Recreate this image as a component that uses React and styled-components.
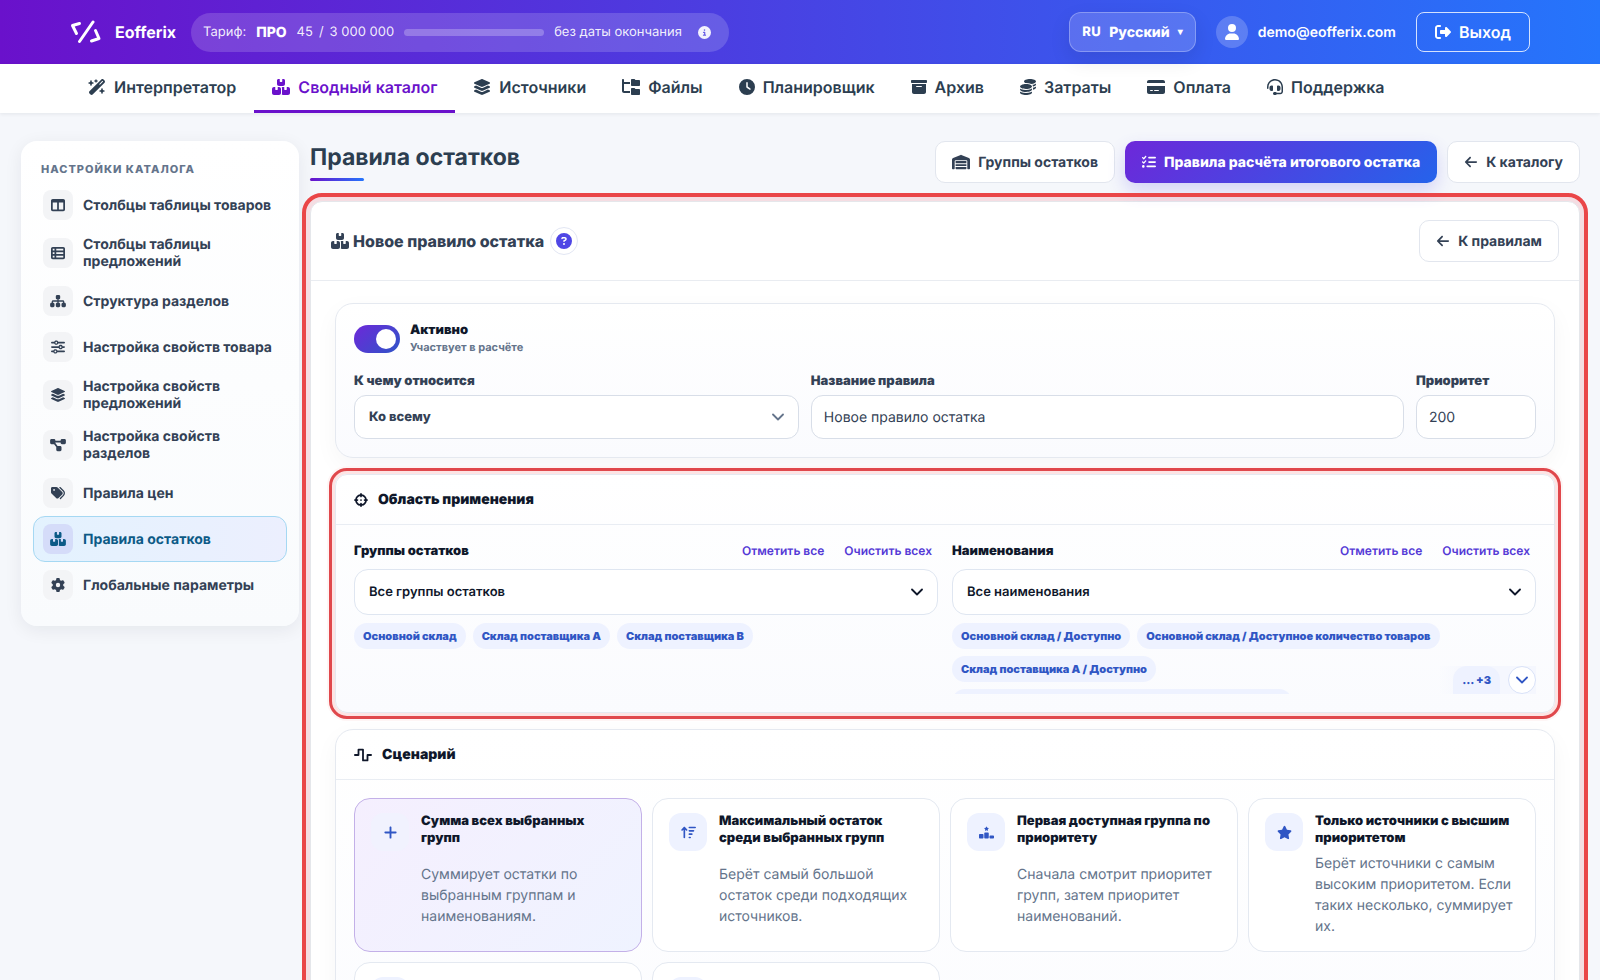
import { useState } from 'react';
import styled, { createGlobalStyle, css } from 'styled-components';
import {
    FaWandMagicSparkles, FaBoxesStacked, FaLayerGroup, FaFolderTree, FaClock, FaBoxArchive,
    FaCoins, FaCreditCard, FaHeadset, FaTableColumns, FaTableList, FaSitemap, FaSliders,
    FaDiagramProject, FaTags, FaGear, FaWarehouse, FaListCheck, FaArrowLeft, FaCrosshairs,
    FaWaveSquare, FaPlus, FaArrowUpWideShort, FaRankingStar, FaStar, FaRightFromBracket,
    FaCircleInfo, FaCircleQuestion, FaUser,
} from 'react-icons/fa6';

const navItems = [
    { label: 'Интерпретатор', Icon: FaWandMagicSparkles, wide: true },
    { label: 'Сводный каталог', Icon: FaBoxesStacked, wide: true, active: true },
    { label: 'Источники', Icon: FaLayerGroup, wide: true },
    { label: 'Файлы', Icon: FaFolderTree, wide: true },
    { label: 'Планировщик', Icon: FaClock },
    { label: 'Архив', Icon: FaBoxArchive },
    { label: 'Затраты', Icon: FaCoins },
    { label: 'Оплата', Icon: FaCreditCard, wide: true },
    { label: 'Поддержка', Icon: FaHeadset },
];

const sideItems = [
    { label: 'Столбцы таблицы товаров', Icon: FaTableColumns },
    { label: 'Столбцы таблицы предложений', Icon: FaTableList },
    { label: 'Структура разделов', Icon: FaSitemap },
    { label: 'Настройка свойств товара', Icon: FaSliders },
    { label: 'Настройка свойств предложений', Icon: FaLayerGroup },
    { label: 'Настройка свойств разделов', Icon: FaDiagramProject },
    { label: 'Правила цен', Icon: FaTags },
    { label: 'Правила остатков', Icon: FaBoxesStacked, active: true },
    { label: 'Глобальные параметры', Icon: FaGear },
];

const groupChips = ['Основной склад', 'Склад поставщика A', 'Склад поставщика B'];

const nameChips = [
    'Основной склад / Доступно',
    'Основной склад / Доступное количество товаров',
    'Склад поставщика A / Доступно',
];

const scenarios = [
    {
        title: 'Сумма всех выбранных групп',
        text: 'Суммирует остатки по выбранным группам и наименованиям.',
        Icon: FaPlus,
    },
    {
        title: 'Максимальный остаток среди выбранных групп',
        text: 'Берёт самый большой остаток среди подходящих источников.',
        Icon: FaArrowUpWideShort,
    },
    {
        title: 'Первая доступная группа по приоритету',
        text: 'Сначала смотрит приоритет групп, затем приоритет наименований.',
        Icon: FaRankingStar,
    },
    {
        title: 'Только источники с высшим приоритетом',
        text: 'Берёт источники с самым высоким приоритетом. Если таких несколько, суммирует их.',
        Icon: FaStar,
    },
];

function Logo(){
    return (
        <svg width="31" height="24" viewBox="0 0 31 24" fill="none" stroke="#fff" strokeWidth="3" strokeLinecap="round" strokeLinejoin="round" aria-hidden="true">
            <path d="M9.500 3.500L2.500 5.500L6.500 13.500" />
            <path d="M23 2L9.500 21.500" />
            <path d="M25.500 10.500L29 18.500L21.500 21" />
        </svg>
    );
}

function Chevron(){
    return (
        <svg width="12" height="8" viewBox="0 0 12 8" fill="none" stroke="currentColor" strokeWidth="1.800" strokeLinecap="round" strokeLinejoin="round" aria-hidden="true">
            <path d="M1 1.500L6 6.500L11 1.500" />
        </svg>
    );
}

function ScopeColumn({ id, label, value, children }){
    return (
        <div>
            <ScopeHead>
                <ScopeLabel htmlFor={id}>{label}</ScopeLabel>
                <ScopeActions>
                    <LinkButton type="button">Отметить все</LinkButton>
                    <LinkButton type="button">Очистить всех</LinkButton>
                </ScopeActions>
            </ScopeHead>
            <SelectWrap $dark>
                <ScopeSelect id={id}>
                    <option>{value}</option>
                </ScopeSelect>
                <Chevron />
            </SelectWrap>
            {children}
        </div>
    );
}

export default function App(){

    const [active, setActive] = useState(true);
    const [name, setName] = useState('Новое правило остатка');
    const [priority, setPriority] = useState('200');
    const [scenario, setScenario] = useState(0);

    return (
        <>
            <GlobalStyle />
            <Header>
                <Brand href="#">
                    <Logo />
                    Eofferix
                </Brand>
                <Tariff>
                    <span>Тариф:</span>
                    <TariffName>ПРО</TariffName>
                    <Usage>
                        <span>45</span>
                        <span>/</span>
                        <span>3 000 000</span>
                    </Usage>
                    <TariffBar />
                    <span>без даты окончания</span>
                    <FaCircleInfo />
                </Tariff>
                <UserArea>
                    <LangButton type="button">
                        <LangCode>RU</LangCode>
                        Русский
                        <Caret>▾</Caret>
                    </LangButton>
                    <User>
                        <Avatar><FaUser /></Avatar>
                        demo@eofferix.com
                    </User>
                    <LogoutButton type="button">
                        <FaRightFromBracket />
                        Выход
                    </LogoutButton>
                </UserArea>
            </Header>

            <Nav>
                {navItems.map(({ label, Icon, active, wide }) => (
                    <NavLink href="#" key={label} $active={active}>
                        <Icon size={wide ? 18 : 16} />
                        {label}
                    </NavLink>
                ))}
            </Nav>

            <Page>
                <Sidebar>
                    <SideTitle>Настройки каталога</SideTitle>
                    {sideItems.map(({ label, Icon, active }) => (
                        <SideLink href="#" key={label} $active={active}>
                            <SideIcon $active={active}><Icon /></SideIcon>
                            {label}
                        </SideLink>
                    ))}
                </Sidebar>

                <Main>
                    <TitleRow>
                        <PageTitle>Правила остатков</PageTitle>
                        <Actions>
                            <Button type="button"><FaWarehouse size={18} />Группы остатков</Button>
                            <Button type="button" $primary><FaListCheck />Правила расчёта итогового остатка</Button>
                            <Button type="button"><FaArrowLeft />К каталогу</Button>
                        </Actions>
                    </TitleRow>

                    <Card>
                        <CardHead>
                            <CardTitle>
                                <FaBoxesStacked size={18} />
                                Новое правило остатка
                            </CardTitle>
                            <HelpButton type="button" aria-label="?"><FaCircleQuestion /></HelpButton>
                            <Button type="button"><FaArrowLeft />К правилам</Button>
                        </CardHead>

                        <CardBody>
                            <Section>
                                <SectionBody>
                                    <SwitchRow>
                                        <Switch id="active" type="checkbox" checked={active} onChange={e => setActive(e.target.checked)} />
                                        <SwitchLabel htmlFor="active">
                                            Активно
                                            <small>Участвует в расчёте</small>
                                        </SwitchLabel>
                                    </SwitchRow>
                                    <Fields>
                                        <Field>
                                            <label htmlFor="target">К чему относится</label>
                                            <SelectWrap>
                                                <Select id="target">
                                                    <option>Ко всему</option>
                                                </Select>
                                                <Chevron />
                                            </SelectWrap>
                                        </Field>
                                        <Field>
                                            <label htmlFor="name">Название правила</label>
                                            <Input id="name" value={name} onChange={e => setName(e.target.value)} />
                                        </Field>
                                        <Field>
                                            <label htmlFor="priority">Приоритет</label>
                                            <Input id="priority" value={priority} onChange={e => setPriority(e.target.value)} />
                                        </Field>
                                    </Fields>
                                </SectionBody>
                            </Section>

                            <Section $highlight>
                                <SectionHead><FaCrosshairs />Область применения</SectionHead>
                                <SectionBody>
                                    <ScopeGrid>
                                        <ScopeColumn id="groups" label="Группы остатков" value="Все группы остатков">
                                            <Chips>
                                                {groupChips.map(chip => <Chip key={chip}>{chip}</Chip>)}
                                            </Chips>
                                        </ScopeColumn>
                                        <ScopeColumn id="names" label="Наименования" value="Все наименования">
                                            <Chips $collapsed>
                                                {nameChips.map(chip => <Chip key={chip}>{chip}</Chip>)}
                                                <ChipPeek />
                                                <More>
                                                    <MoreCount>... +3</MoreCount>
                                                    <MoreButton type="button" aria-label="+3"><Chevron /></MoreButton>
                                                </More>
                                            </Chips>
                                        </ScopeColumn>
                                    </ScopeGrid>
                                </SectionBody>
                            </Section>

                            <Section>
                                <SectionHead><FaWaveSquare size={18} />Сценарий</SectionHead>
                                <SectionBody>
                                    <Scenarios>
                                        {scenarios.map(({ title, text, Icon }, index) => (
                                            <Scenario type="button" key={title} $active={index === scenario} onClick={() => setScenario(index)}>
                                                <ScenarioIcon $active={index === scenario}><Icon /></ScenarioIcon>
                                                <ScenarioCopy>
                                                    <strong>{title}</strong>
                                                    <span>{text}</span>
                                                </ScenarioCopy>
                                            </Scenario>
                                        ))}
                                        <Scenario as="div"><ScenarioIcon /></Scenario>
                                        <Scenario as="div"><ScenarioIcon /></Scenario>
                                    </Scenarios>
                                </SectionBody>
                            </Section>
                        </CardBody>
                    </Card>
                </Main>
            </Page>
        </>
    );
}

const GlobalStyle = createGlobalStyle`
    * {
        box-sizing: border-box;
    }
    body {
        margin: 0;
        background: #f5f7fb;
        color: #2c3e50;
        font-family: Inter, 'Noto Sans', sans-serif;
        font-size: 14px;
        text-rendering: geometricPrecision;
    }
    button, input, select {
        font-family: inherit;
        text-rendering: inherit;
    }
    button {
        cursor: pointer;
    }
    a {
        text-decoration: none;
    }
    svg {
        flex: none;
    }
`

const Header = styled.header`
    display: flex;
    align-items: center;
    height: 64px;
    padding: 0 70px;
    background: linear-gradient(90deg, #6a11cb 0%, #2575fc 100%);
    color: #fff;
`

const Brand = styled.a`
    display: flex;
    align-items: center;
    gap: 14px;
    margin-right: 15px;
    color: #fff;
    font-size: 16px;
    font-weight: 700;
`

const Tariff = styled.div`
    display: flex;
    align-items: center;
    gap: 10px;
    height: 39px;
    padding: 0 18px 0 12px;
    border-radius: 20px;
    background: rgba(255, 255, 255, 0.16);
    color: rgba(255, 255, 255, 0.92);
    font-size: 13px;
    white-space: nowrap;
    svg {
        margin-left: 6px;
    }
`

const TariffName = styled.strong`
    color: #fff;
    font-size: 14px;
    font-weight: 800;
`

const Usage = styled.span`
    display: flex;
    gap: 6px;
`

const TariffBar = styled.div`
    width: 140px;
    height: 7px;
    border-radius: 4px;
    background: rgba(255, 255, 255, 0.25);
`

const UserArea = styled.div`
    display: flex;
    align-items: center;
    gap: 20px;
    margin-left: auto;
`

const LangButton = styled.button`
    display: flex;
    align-items: center;
    gap: 8px;
    height: 40px;
    padding: 0 12px;
    border: 1px solid rgba(255, 255, 255, 0.28);
    border-radius: 12px;
    background: rgba(255, 255, 255, 0.16);
    box-shadow: 0 8px 20px rgba(15, 23, 42, 0.1);
    color: #fff;
    font-size: 14px;
    font-weight: 800;
`

const LangCode = styled.span`
    font-size: 13px;
    letter-spacing: 0.5px;
`

const Caret = styled.span`
    font-size: 10px;
`

const User = styled.div`
    display: flex;
    align-items: center;
    gap: 10px;
    font-size: 14px;
    font-weight: 600;
`

const Avatar = styled.span`
    display: grid;
    place-items: center;
    width: 32px;
    height: 32px;
    border-radius: 50%;
    background: rgba(255, 255, 255, 0.2);
    font-size: 16px;
`

const LogoutButton = styled.button`
    display: flex;
    align-items: center;
    gap: 8px;
    height: 40px;
    padding: 0 18px;
    border: 1px solid rgba(255, 255, 255, 0.8);
    border-radius: 8px;
    background: transparent;
    color: #fff;
    font-size: 16px;
    font-weight: 600;
`

const Nav = styled.nav`
    display: flex;
    height: 49px;
    padding: 0 70px;
    background: #fff;
    box-shadow: 0 1px 4px rgba(15, 23, 42, 0.08);
`

const NavLink = styled.a`
    display: flex;
    align-items: center;
    gap: 8px;
    padding: 0 18px;
    border-bottom: 3px solid ${({ $active }) => $active ? '#6a11cb' : 'transparent'};
    color: ${({ $active }) => $active ? '#6a11cb' : '#2c3e50'};
    font-size: 16px;
    font-weight: 600;
    white-space: nowrap;
`

const Page = styled.div`
    display: flex;
    align-items: flex-start;
    gap: 11px;
    padding: 28px 20px 28px 21px;
`

const Sidebar = styled.aside`
    flex: none;
    width: 278px;
    padding: 21px 12px 18px;
    border-radius: 16px;
    background: linear-gradient(180deg, #ffffff 0%, #f9fbfd 100%);
    box-shadow: 0 4px 18px rgba(15, 23, 42, 0.07);
`

const SideTitle = styled.h2`
    margin: 0 0 6px;
    padding: 0 8px;
    color: #64748b;
    font-size: 11px;
    line-height: 14px;
    font-weight: 800;
    letter-spacing: 1px;
    text-transform: uppercase;
`

const SideLink = styled.a`
    display: flex;
    align-items: center;
    gap: 10px;
    padding: 7px 9px;
    border: 1px solid transparent;
    border-radius: 12px;
    color: #334155;
    font-size: 14px;
    line-height: 17px;
    font-weight: 700;
    ${({ $active }) => $active && css`
        border-color: #a5d8f3;
        background: linear-gradient(90deg, #e3f2fe 0%, #eceffe 100%);
        color: #0c5a86;
    `}
`

const SideIcon = styled.span`
    display: grid;
    flex: none;
    place-items: center;
    width: 30px;
    height: 30px;
    border-radius: 8px;
    background: ${({ $active }) => $active ? '#d5dcf9' : '#f3f4f6'};
    svg {
        width: 16px;
        height: 14px;
    }
`

const Main = styled.main`
    flex: 1;
    min-width: 0;
`

const TitleRow = styled.div`
    display: flex;
    align-items: flex-start;
    justify-content: space-between;
    margin-bottom: 18px;
`

const PageTitle = styled.h1`
    margin: 0;
    color: #2c3e50;
    font-size: 23px;
    line-height: 32px;
    font-weight: 700;
    &::after {
        content: '';
        display: block;
        width: 54px;
        height: 3px;
        margin-top: 5px;
        border-radius: 2px;
        background: linear-gradient(90deg, #6a11cb 0%, #2575fc 100%);
    }
`

const Actions = styled.div`
    display: flex;
    gap: 10px;
`

const Button = styled.button`
    display: flex;
    align-items: center;
    gap: 8px;
    height: 42px;
    padding: 0 16px;
    border: 1px solid #e2e6ee;
    border-radius: 10px;
    background: #fff;
    color: #334155;
    font-size: 14px;
    font-weight: 700;
    white-space: nowrap;
    ${({ $primary }) => $primary && css`
        border-color: transparent;
        background: linear-gradient(135deg, #6d28d9 0%, #2563eb 100%) border-box;
        box-shadow: 0 8px 18px rgba(79, 70, 229, 0.2);
        color: #fff;
        font-weight: 800;
    `}
`

const Card = styled.section`
    border: 1px solid #e5e7eb;
    border-radius: 12px;
    background: #fff;
    outline: 4px solid #ea4648;
    outline-offset: 4px;
    box-shadow: 0 0 0 4px #f5dde2;
`

const CardHead = styled.div`
    display: flex;
    align-items: center;
    gap: 6px;
    padding: 18px 20px;
    border-bottom: 1px solid #e9ecf1;
    > :last-child {
        margin-left: auto;
    }
`

const CardTitle = styled.h2`
    display: flex;
    align-items: center;
    gap: 4px;
    margin: 0;
    color: #334155;
    font-size: 16px;
    font-weight: 800;
`

const HelpButton = styled.button`
    display: grid;
    place-items: center;
    width: 28px;
    height: 28px;
    padding: 0;
    border: 1px solid #e2e6f3;
    border-radius: 50%;
    background: #fff;
    color: #4f46e5;
    font-size: 16px;
`

const CardBody = styled.div`
    display: grid;
    gap: 16px;
    padding: 22px 24px;
`

const Section = styled.section`
    border: 1px solid #e5e9f0;
    border-radius: 18px;
    background: linear-gradient(180deg, #ffffff 0%, #fafbfe 100%);
    box-shadow: 0 8px 24px rgba(15, 23, 42, 0.04);
    ${({ $highlight }) => $highlight && css`
        border-radius: 12px;
        outline: 3px solid #e0484c;
        outline-offset: 3px;
        box-shadow: 0 0 0 3px #fde4e4, 0 0 0 8px #fef5f5;
    `}
`

const SectionHead = styled.h3`
    display: flex;
    align-items: center;
    gap: 10px;
    height: 50px;
    margin: 0;
    padding: 0 18px;
    border-bottom: 1px solid #e9edf3;
    color: #0f172a;
    font-size: 14px;
    font-weight: 900;
`

const SectionBody = styled.div`
    padding: 18px;
`

const SwitchRow = styled.div`
    display: flex;
    align-items: center;
    gap: 10px;
    margin-bottom: 18px;
`

const Switch = styled.input`
    position: relative;
    appearance: none;
    width: 46px;
    height: 28px;
    margin: 0;
    border-radius: 14px;
    background: #cbd5e1;
    cursor: pointer;
    &::after {
        content: '';
        position: absolute;
        top: 4px;
        left: 4px;
        width: 20px;
        height: 20px;
        border-radius: 50%;
        background: #fff;
    }
    &:checked {
        background: linear-gradient(135deg, #6d28d9 0%, #2f55c8 100%);
    }
    &:checked::after {
        left: 22px;
    }
`

const SwitchLabel = styled.label`
    color: #0f172a;
    font-size: 13px;
    line-height: 17px;
    font-weight: 900;
    small {
        display: block;
        color: #64748b;
        font-size: 11px;
        line-height: 16px;
        font-weight: 700;
    }
`

const Fields = styled.div`
    display: grid;
    grid-template-columns: 3fr 4fr 120px;
    gap: 12px;
`

const Field = styled.div`
    min-width: 0;
    label {
        display: block;
        margin-bottom: 6px;
        color: #334155;
        font-size: 13px;
        line-height: 16px;
        font-weight: 900;
    }
`

const SelectWrap = styled.div`
    position: relative;
    color: ${({ $dark }) => $dark ? '#0f172a' : '#64748b'};
    svg {
        position: absolute;
        top: 50%;
        right: 15px;
        margin-top: -4px;
        pointer-events: none;
    }
`

const Select = styled.select`
    display: block;
    appearance: none;
    width: 100%;
    height: 44px;
    padding: 0 14px;
    border: 1px solid #d8dee8;
    border-radius: 12px;
    background: #fff;
    color: #334155;
    font-size: 13px;
    font-weight: 800;
`

const ScopeSelect = styled(Select)`
    height: 46px;
    border-color: #dfe6f1;
    border-radius: 14px;
    color: #0f172a;
    font-weight: 600;
`

const Input = styled.input`
    display: block;
    width: 100%;
    height: 44px;
    padding: 0 12px;
    border: 1px solid #d8dee8;
    border-radius: 12px;
    background: #fff;
    color: #334155;
    font-size: 14px;
`

const ScopeGrid = styled.div`
    display: grid;
    grid-template-columns: 1fr 1fr;
    gap: 14px;
`

const ScopeHead = styled.div`
    display: flex;
    align-items: center;
    justify-content: space-between;
    margin-bottom: 10px;
`

const ScopeLabel = styled.label`
    color: #0f172a;
    font-size: 13px;
    line-height: 16px;
    font-weight: 900;
`

const ScopeActions = styled.div`
    display: flex;
    gap: 8px;
`

const LinkButton = styled.button`
    padding: 0 6px;
    border: 0;
    background: none;
    color: #5439d6;
    font-size: 12px;
    line-height: 14px;
    font-weight: 600;
`

const Chips = styled.div`
    position: relative;
    display: flex;
    flex-wrap: wrap;
    align-content: flex-start;
    gap: 7px;
    margin-top: 8px;
    ${({ $collapsed }) => $collapsed && css`
        height: 71px;
        padding-right: 72px;
        overflow: hidden;
    `}
`

const Chip = styled.span`
    height: 26px;
    padding: 0 9px;
    border-radius: 13px;
    background: #eef2ff;
    color: #3056c4;
    font-size: 11px;
    line-height: 26px;
    font-weight: 900;
`

/* top edge of the next chip, cut by the collapsed list */
const ChipPeek = styled(Chip)`
    width: 340px;
`

const More = styled.div`
    position: absolute;
    right: 0;
    bottom: 0;
    display: flex;
    gap: 8px;
    padding-left: 14px;
    background: linear-gradient(90deg, rgba(247, 249, 255, 0) 0%, #f5f7fe 30%);
`

const MoreCount = styled.span`
    padding: 0 9px;
    border-radius: 14px 14px 0 0;
    background: #eef2ff;
    color: #3056c4;
    font-size: 11px;
    line-height: 28px;
    font-weight: 900;
`

const MoreButton = styled.button`
    display: grid;
    place-items: center;
    width: 28px;
    height: 28px;
    padding: 0;
    border: 1px solid #d9e2f8;
    border-radius: 50%;
    background: #fff;
    color: #3056c4;
`

const Scenarios = styled.div`
    display: grid;
    grid-template-columns: repeat(4, 1fr);
    grid-auto-rows: 1fr;
    gap: 10px;
`

const Scenario = styled.button`
    display: flex;
    gap: 12px;
    padding: 14px 16px;
    border: 1px solid ${({ $active }) => $active ? '#c3b0e8' : '#e4e9f1'};
    border-radius: 16px;
    background: ${({ $active }) => $active ? 'linear-gradient(135deg, #f5effe 0%, #eff3ff 100%)' : '#fff'};
    text-align: left;
`

const ScenarioIcon = styled.span`
    display: grid;
    flex: none;
    place-items: center;
    width: 38px;
    height: 38px;
    border-radius: 12px;
    background: ${({ $active }) => $active ? '#f1f2fe' : '#eef2ff'};
    color: #3056c4;
    font-size: 15px;
`

const ScenarioCopy = styled.span`
    display: grid;
    gap: 6px;
    align-self: stretch;
    strong {
        color: #0f172a;
        font-size: 13px;
        line-height: 17px;
        font-weight: 900;
    }
    span {
        color: #64748b;
        font-size: 14px;
        line-height: 21px;
    }
`
